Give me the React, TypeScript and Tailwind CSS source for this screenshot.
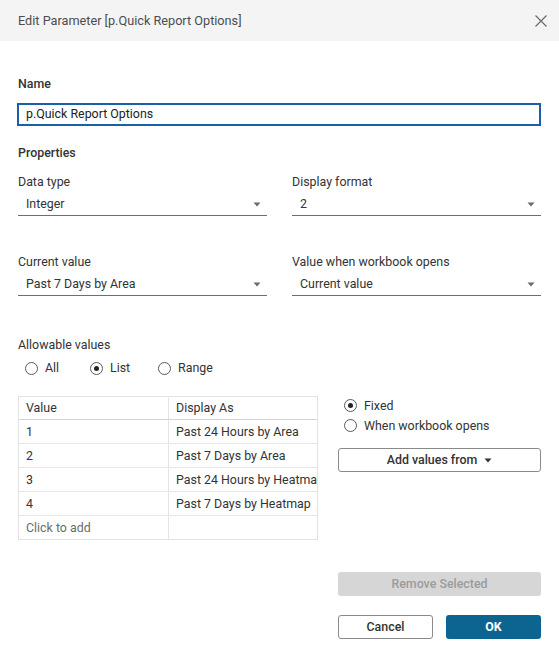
import React from "react";

const font = { fontFamily: 'Roboto, "Liberation Sans", Arial, sans-serif' };

function Caret({ className = "" }: { className?: string }) {
  return (
    <svg width="8" height="5" viewBox="0 0 8 5" className={className}>
      <path d="M0.5 0.5 L7.5 0.5 L4 4.5 Z" fill="currentColor" />
    </svg>
  );
}

function Select({ value }: { value: string }) {
  return (
    <div className="flex h-[23px] items-center justify-between border-b border-[#6e6e6e] pt-px pl-[8px] pr-[6px] text-[12.4px] text-[#333]">
      <span>{value}</span>
      <Caret className="text-[#6b6b6b]" />
    </div>
  );
}

function Radio({ label, checked = false }: { label: string; checked?: boolean }) {
  return (
    <div className="flex items-center gap-[7px] text-[12.4px] text-[#333]">
      <span className="flex h-[13px] w-[13px] items-center justify-center rounded-full border border-[#5a5a5a] bg-white">
        {checked && <span className="h-[5px] w-[5px] rounded-full bg-[#222]" />}
      </span>
      <span>{label}</span>
    </div>
  );
}

const rows: [string, string][] = [
  ["1", "Past 24 Hours by Area"],
  ["2", "Past 7 Days by Area"],
  ["3", "Past 24 Hours by Heatmap"],
  ["4", "Past 7 Days by Heatmap"],
];

export default function App() {
  return (
    <div className="h-[655px] w-[559px] overflow-hidden bg-white" style={font}>
      {/* Header */}
      <div className="flex h-[41px] items-center justify-between bg-[#f4f4f4] pl-[18px] pr-[12px]">
        <span className="text-[12.7px] text-[#4d4d4d]">Edit Parameter [p.Quick Report Options]</span>
        <svg width="12" height="12" viewBox="0 0 12 12" className="text-[#6a6a6a]">
          <path d="M0.5 0.5 L11.5 11.5 M11.5 0.5 L0.5 11.5" stroke="currentColor" strokeWidth="1.2" />
        </svg>
      </div>

      <div className="px-[18px] pt-[35px]">
        <div className="text-[12.4px] leading-[16px] font-medium text-[#333]">Name</div>
        <div className="mt-[11px] -ml-px flex h-[23px] items-center border-2 border-[#1b5fa8] pl-[7px] text-[12.4px] text-[#222]">
          p.Quick Report Options
        </div>

        <div className="mt-[19px] text-[12.4px] leading-[16px] font-medium text-[#333]">Properties</div>

        <div className="mt-[13px] grid grid-cols-2 gap-x-[25px]">
          <div>
            <div className="text-[12.4px] leading-[16px] text-[#333]">Data type</div>
            <div className="mt-[3px]">
              <Select value="Integer" />
            </div>
          </div>
          <div>
            <div className="text-[12.4px] leading-[16px] text-[#333]">Display format</div>
            <div className="mt-[3px]">
              <Select value="2" />
            </div>
          </div>
        </div>

        <div className="mt-[38px] grid grid-cols-2 gap-x-[25px]">
          <div>
            <div className="text-[12.4px] leading-[16px] text-[#333]">Current value</div>
            <div className="mt-[3px]">
              <Select value="Past 7 Days by Area" />
            </div>
          </div>
          <div>
            <div className="text-[12.4px] leading-[16px] text-[#333]">Value when workbook opens</div>
            <div className="mt-[3px]">
              <Select value="Current value" />
            </div>
          </div>
        </div>

        <div className="mt-[41px] text-[12.4px] leading-[16px] text-[#333]">Allowable values</div>
        <div className="mt-[7px] flex h-[16px] items-center pl-[7px]">
          <div className="w-[65px]">
            <Radio label="All" />
          </div>
          <div className="w-[68px]">
            <Radio label="List" checked />
          </div>
          <Radio label="Range" />
        </div>

        <div className="mt-[20px] flex">
          {/* Values table */}
          <div className="w-[300px] self-start border border-[#e3e3e3] text-[12.4px] text-[#333]">
            <div className="flex h-[23px] border-b border-[#d4d4d4] pt-px">
              <div className="flex w-[150px] items-center border-r border-[#e3e3e3] pl-[7px]">Value</div>
              <div className="flex flex-1 items-center pl-[7px]">Display As</div>
            </div>
            {rows.map(([v, d]) => (
              <div key={v} className="flex h-[24px] border-b border-[#e6e6e6]">
                <div className="flex w-[150px] items-center border-r border-[#e3e3e3] pt-px pl-[7px]">{v}</div>
                <div className="flex min-w-0 flex-1 items-center overflow-hidden whitespace-nowrap pt-px pl-[7px]">{d}</div>
              </div>
            ))}
            <div className="flex h-[23px]">
              <div className="flex w-[150px] items-center border-r border-[#e3e3e3] pt-px pl-[7px] text-[#6b6b6b]">
                Click to add
              </div>
              <div className="flex-1" />
            </div>
          </div>

          {/* Right side */}
          <div className="ml-[20px] flex flex-1 flex-col">
            <div className="flex flex-col pl-[6px]">
              <div className="flex h-[20px] items-center">
                <Radio label="Fixed" checked />
              </div>
              <div className="flex h-[20px] items-center">
                <Radio label="When workbook opens" />
              </div>
            </div>
            <button className="mt-[12px] flex h-[24px] items-center justify-center gap-[7px] rounded-[3px] border border-[#8a8a8a] bg-white text-[12.4px] font-medium text-[#333]">
              Add values from
              <Caret className="text-[#333]" />
            </button>
            <button className="mt-[100px] flex h-[24px] items-center justify-center rounded-[3px] bg-[#d6d6d6] text-[12.4px] font-medium text-[#9c9c9c]">
              Remove Selected
            </button>
          </div>
        </div>

        <div className="mt-[19px] flex justify-end gap-[13px]">
          <button className="flex h-[24px] w-[95px] items-center justify-center rounded-[3px] border border-[#8a8a8a] bg-white text-[12.4px] font-medium text-[#333]">
            Cancel
          </button>
          <button className="flex h-[24px] w-[95px] items-center justify-center rounded-[3px] bg-[#0c6491] text-[12.4px] font-bold text-white">
            OK
          </button>
        </div>
      </div>
    </div>
  );
}
